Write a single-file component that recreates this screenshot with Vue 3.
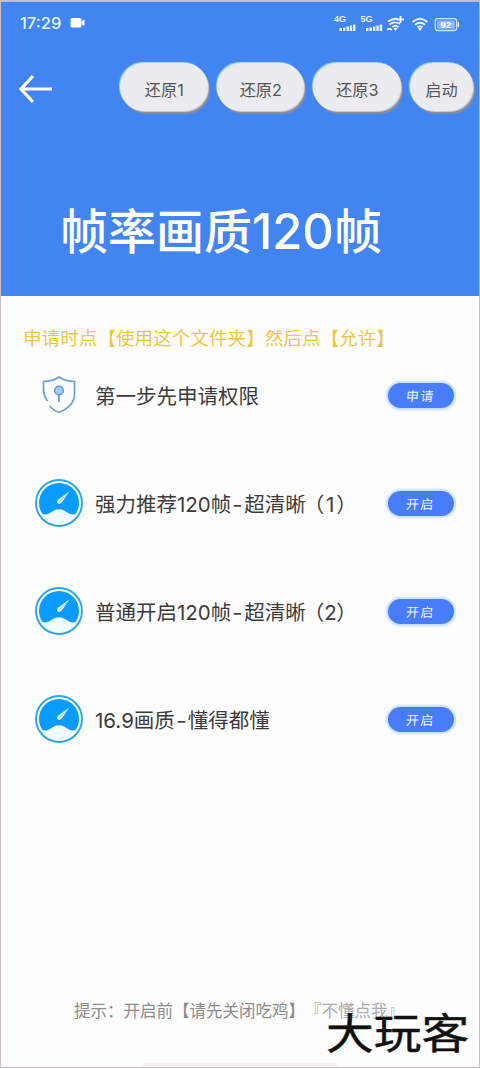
<script setup>
const restoreButtons = ['还原1', '还原2', '还原3', '启动']
const rows = [
  { icon: 'shield', parts: ['第一步先申请权限'], action: '申请' },
  { icon: 'gauge', parts: ['强力推荐120帧', '超清晰', '1'], action: '开启' },
  { icon: 'gauge', parts: ['普通开启120帧', '超清晰', '2'], action: '开启' },
  { icon: 'gauge', parts: ['16.9画质', '懂得都懂'], action: '开启' },
]
</script>

<template>
  <div class="screen">
    <header class="hero">
      <div class="status">
        <span class="time">17:29</span>
        <svg class="camera" width="16" height="12" viewBox="0 0 16 12">
          <rect x="0.5" y="1" width="11" height="9.5" rx="1.5" fill="#fff" />
          <path d="M12 4l2.5-1.5v6.5L12 7.7z" fill="#fff" />
        </svg>
        <svg class="signals" width="128" height="20" viewBox="0 0 128 20" fill="#e9f4ff">
          <text x="1" y="10" class="net">4G</text>
          <path d="M6.500 16h2.400v3H6.500zM10 15.500h2.400V19H10zM13.500 14.500h2.400V19h-2.400zM16.700 13.500h2.400V19h-2.400zM20 12.500h2.400V19H20z" />
          <text x="27.500" y="10" class="net">5G</text>
          <path d="M33 16h2.400v3H33zM36.500 15.500h2.400V19h-2.400zM40 14.500h2.400V19H40zM43.400 13.500h2.400V19h-2.400zM46.700 12.500h2.400V19h-2.400z" />
          <g fill="none" stroke="#e9f4ff" stroke-width="1.900">
            <path d="M55 9.500q5-3.500 10-2.500M56.500 12.500q5-4 10.500-.5M59.500 15q3-2.500 6 0M54 17.500l3-.7 2 1M64 7.500h7M67.500 4v7" />
            <path d="M79.500 10q7.500-6.500 15 0M82 12.800q5-4 10 0M84.500 15.300q2.500-1.900 5 0" />
          </g>
          <path d="M60.500 16.500q2-1.500 4 0l-2 2.500zM85 16.500q2-1.500 4 0l-2 2.500z" />
          <rect x="102.200" y="6.700" width="21.500" height="11.800" rx="2.500" fill="none" stroke="#cfe3ff" stroke-width="1.300" />
          <rect x="104" y="8.500" width="18" height="8.200" rx="1" fill="#8db9f8" />
          <path d="M124.700 10h1.300v5h-1.300z" />
          <text x="107.500" y="16" class="charge">92</text>
        </svg>
      </div>
      <div class="toolbar">
        <svg class="back" width="36" height="30" viewBox="0 0 36 30">
          <path d="M15 2L3 15l12 13M3 15h31" fill="none" stroke="#fff" stroke-width="3.200" />
        </svg>
        <div class="pills">
          <button v-for="label in restoreButtons" :key="label" class="pill" :class="{ short: label.length === 2 }">{{ label }}</button>
        </div>
      </div>
      <h1>帧率画质<span class="num">120</span>帧</h1>
    </header>

    <main>
      <p class="notice">申请时点【使用这个文件夹】然后点【允许】</p>
      <ul>
        <li v-for="row in rows" :key="row.parts[0]">
          <svg v-if="row.icon === 'shield'" class="icon" width="50" height="50" viewBox="0 0 50 50">
            <path d="M13 30.500Q9.500 25 9.500 19V11.500Q18 11.500 25 7q7 4.500 15.500 4.500V24q0 12-15.500 18.500-5-1.700-9-6" fill="none" stroke="#6b9fdb" stroke-width="1.700" stroke-linecap="round" />
            <circle cx="25" cy="20.500" r="4.300" fill="#a6cbf8" stroke="#5c98e2" stroke-width="1.500" />
            <path d="M25 25v7" stroke="#5c98e2" stroke-width="1.700" />
          </svg>
          <svg v-else class="icon" width="50" height="50" viewBox="0 0 50 50">
            <circle cx="25" cy="25" r="23" fill="#f1fdff" stroke="#31a5e4" stroke-width="1.900" />
            <path d="M8.500 36Q5 31 5 25a20 20 0 0 1 40 0q0 6-3.500 11-3 1.200-7-.8-2.500-1.400-4.500-2.700-5-2.600-10 0-2 1.300-4.500 2.700-4 2-7 .8z" fill="#0a9bff" />
            <path d="M35.500 13.300L28 24.300q-2.300 2.500-4.300 1.200-1.500-2 .9-4.300z" fill="#d9f2ff" />
            <path d="M33 16l-7.500 7.500" stroke="#8fd0fb" stroke-width=".8" />
          </svg>
          <span class="label">{{ row.parts[0] }}<template v-if="row.parts[1]"><span class="dash">-</span>{{ row.parts[1] }}</template><span v-if="row.parts[2]" class="variant">（<span class="digit">{{ row.parts[2] }}</span>）</span></span>
          <button class="action"><span class="script">{{ row.action }}</span></button>
        </li>
      </ul>
    </main>

    <footer>提示：开启前【请先关闭吃鸡】<span class="faded">『不懂点我』</span></footer>
    <div class="watermark">大玩客</div>
    <div class="handle"></div>
  </div>
</template>

<style>
body {
  background: #fdfdfd;
}
</style>

<style scoped>
.screen {
  position: relative;
  box-sizing: border-box;
  width: 480px;
  height: 1068px;
  overflow: hidden;
  display: flex;
  flex-direction: column;
  background: #fdfdfd;
  border: 1px solid #c9bec5;
  font-family: "Noto Sans CJK SC", sans-serif;
}
button {
  font-family: inherit;
  border: 0;
  padding: 0;
}
.hero {
  box-sizing: border-box;
  height: 295px;
  flex: none;
  background: #4285f1;
  border-top: 1px solid #a6c1ec;
  color: #fff;
}
.status {
  display: flex;
  align-items: center;
  height: 42px;
  padding-left: 19px;
}
.time {
  width: 50px;
  font: 500 16.500px/20px Inter, sans-serif;
  color: #e5f2ff;
}
.signals {
  margin: -3px 0 0 247px;
}
.net {
  font: 700 9px "Liberation Sans", sans-serif;
}
.charge {
  font: 700 9.500px "Liberation Sans", sans-serif;
  fill: #fff;
}
.toolbar {
  display: flex;
  align-items: center;
  height: 48px;
  margin-top: 19px;
  padding-left: 17px;
}
.back {
  margin-top: 4px;
}
.pills {
  display: flex;
  gap: 9px;
  margin-left: 66px;
}
.pill {
  width: 87.500px;
  height: 48px;
  border-radius: 24px;
  padding: 4px 0 0 1px;
  background: #ececf0;
  color: #555;
  font-family: Inter, "Noto Sans CJK SC", sans-serif;
  font-size: 16.200px;
  box-shadow: -1px -1px 1px #a9d7ff, 1px 1px 0 #c7c9ce, 2px 3px 1px #858e9d;
}
.pill.short {
  width: 63px;
}
h1 {
  margin: 79px 0 0 59px;
  font-size: 48px;
  line-height: 76px;
  font-weight: 500;
  white-space: nowrap;
}
.num {
  font-family: Inter, sans-serif;
  font-size: 49px;
  letter-spacing: -0.100px;
}
.notice {
  margin: 27px 0 0 22px;
  height: 27px;
  font-size: 18.600px;
  line-height: 27px;
  color: #edc83e;
  white-space: nowrap;
}
ul {
  list-style: none;
  margin: -9px 0 0;
  padding: 0;
}
li {
  display: flex;
  align-items: center;
  height: 108px;
  padding: 0 25px 0 33px;
}
.icon {
  flex: none;
}
.label {
  flex: 1;
  margin: -1px 0 0 11px;
  font-family: Inter, "Noto Sans CJK SC", sans-serif;
  font-size: 20.500px;
  color: #3b3b3b;
  white-space: nowrap;
}
.variant {
  margin-left: -2px;
}
.digit {
  display: inline-block;
  width: 12px;
  text-align: center;
}
.dash {
  display: inline-block;
  width: 13px;
  text-align: center;
  transform: scaleX(1.100);
}
.action {
  width: 66px;
  height: 25px;
  border-radius: 13px;
  background: #477cfb;
  color: #e9f3ff;
  font-size: 13px;
  letter-spacing: 1.500px;
  line-height: 23px;
  box-shadow: 0 0 2px 2px #c5def9;
}
.script {
  display: inline-block;
  transform: skewX(-5deg);
}
footer {
  position: absolute;
  left: 73px;
  top: 996px;
  font-size: 16.500px;
  line-height: 26px;
  color: #8c8c8c;
  white-space: nowrap;
  text-spacing-trim: space-all;
}
.faded {
  color: #aaa;
}
.watermark {
  position: absolute;
  left: 325px;
  top: 1001px;
  font-size: 47.700px;
  line-height: 60px;
  color: #111;
  -webkit-text-stroke: 0.500px #111;
  transform: scaleY(0.870);
  white-space: nowrap;
}
.handle {
  position: absolute;
  left: 142px;
  bottom: 0;
  width: 194px;
  height: 4px;
  border-radius: 3px 3px 0 0;
  background: #f6f2f4;
}
</style>
